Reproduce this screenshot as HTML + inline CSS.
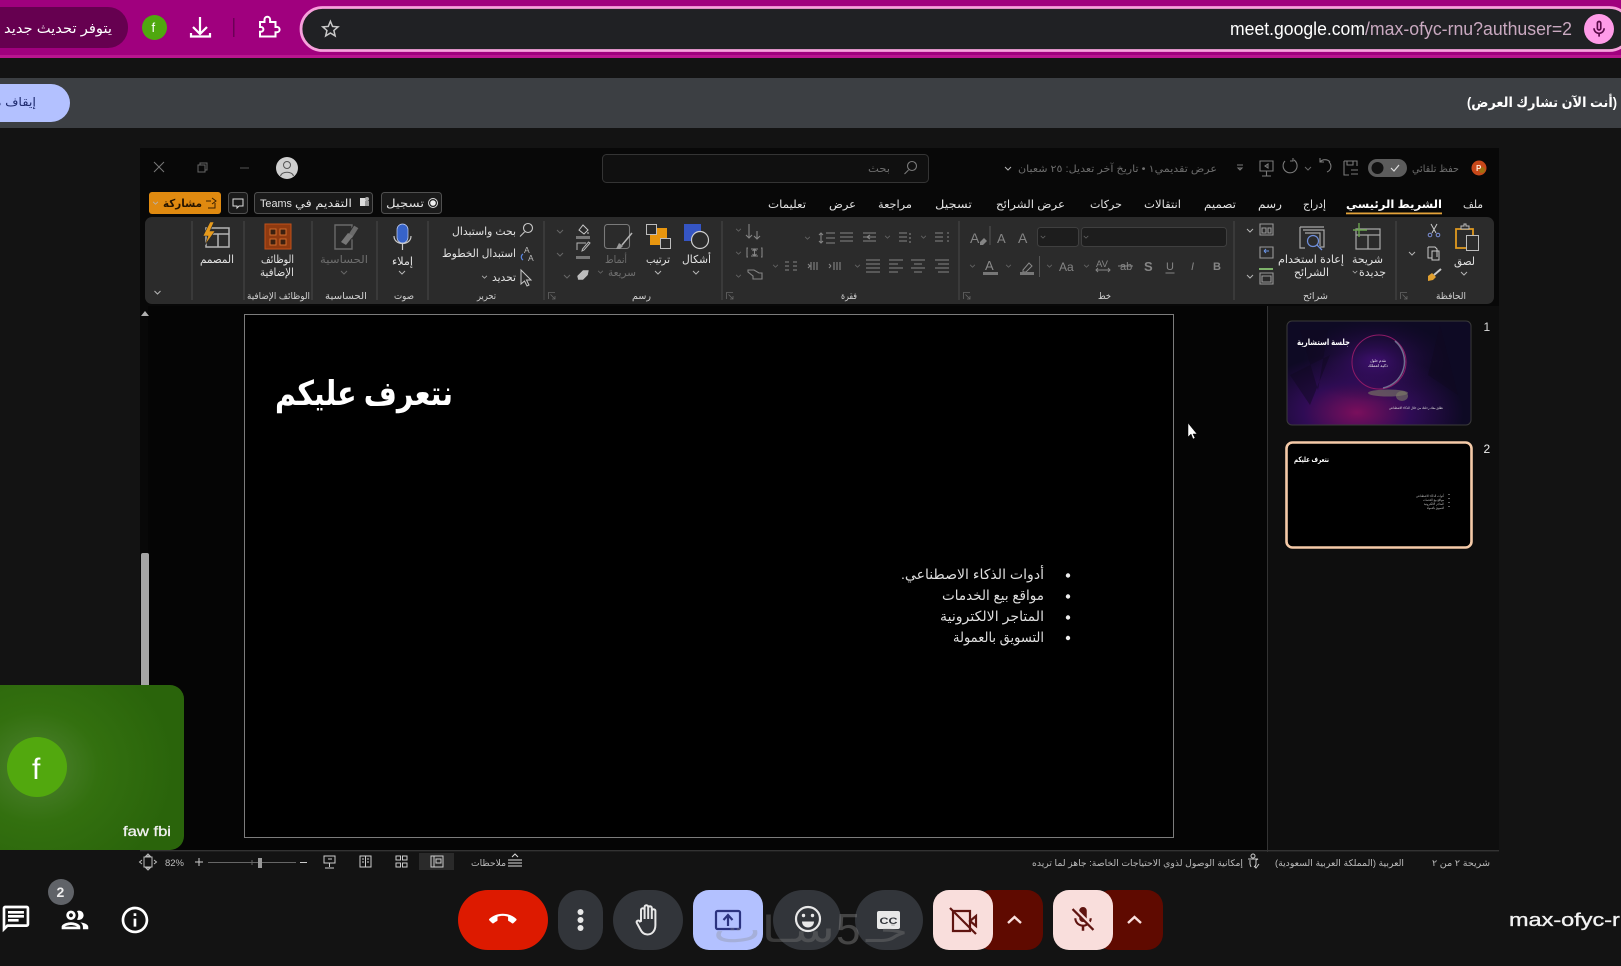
<!DOCTYPE html>
<html lang="ar"><head><meta charset="utf-8"><title>Meet</title>
<style>
html,body{margin:0;padding:0;background:#131313;width:1621px;height:966px;overflow:hidden}
svg{display:block;position:absolute;left:0;top:0}
text{font-family:"Liberation Sans","DejaVu Sans","Noto Sans CJK SC",sans-serif;fill:#d8d8d8;font-size:10.5px}
.t{font-size:11px;fill:#e2e2e2}
.d{fill:#6e6e6e}
.g{font-size:9.5px;fill:#cfcfcf}
.s{font-size:9px;fill:#bdbdbd}
.i{fill:none;stroke:#c9c9c9;stroke-width:1.1}
.m{fill:none;stroke:#7a7a7a;stroke-width:1.1}
.w{fill:#fff}
.r{direction:rtl;unicode-bidi:plaintext}
</style></head><body>
<svg width="1621" height="966" viewBox="0 0 1621 966" xmlns="http://www.w3.org/2000/svg">
<defs>
<symbol id="c" viewBox="0 0 8 5" overflow="visible"><path d="M1 1l3 3 3-3" fill="none" stroke="#b5b5b5" stroke-width="1"/></symbol>
<symbol id="cd" viewBox="0 0 8 5" overflow="visible"><path d="M1 1l3 3 3-3" fill="none" stroke="#666" stroke-width="1"/></symbol>
<symbol id="l" viewBox="0 0 8 8" overflow="visible"><path d="M.5 7V.5H7M2.500 2.500l4.500 4.500M7 4v3H4" fill="none" stroke="#666" stroke-width=".8"/></symbol>
<radialGradient id="tile" cx="20%" cy="50%" r="75%"><stop offset="0" stop-color="#4f8232"/><stop offset=".45" stop-color="#33700f"/><stop offset="1" stop-color="#2a640b"/></radialGradient>
<radialGradient id="th1" cx="38%" cy="88%" r="58%"><stop offset="0" stop-color="#7a0f5c"/><stop offset=".5" stop-color="#2f0c55"/><stop offset="1" stop-color="#0e0a24"/></radialGradient>
<radialGradient id="th2" cx="48%" cy="38%" r="40%"><stop offset="0" stop-color="#45107a" stop-opacity=".85"/><stop offset="1" stop-color="#200a3a" stop-opacity="0"/></radialGradient>
<clipPath id="cthumb"><rect x="1287" y="321" width="184" height="104" rx="5"/></clipPath>
</defs>

<!-- browser chrome -->
<rect width="1621" height="55" fill="#a0007e"/>
<rect y="55" width="1621" height="3" fill="#b8158f"/>
<rect x="-30" y="7" width="158" height="41" rx="20" fill="#660050"/>
<text x="4" y="33" textLength="108" lengthAdjust="spacingAndGlyphs" style="font-size:14px;fill:#fff">يتوفر تحديث جديد</text>
<ellipse cx="154.500" cy="27.500" rx="12.500" ry="12.500" fill="#4fa80f"/>
<text x="151.500" y="32" style="font-size:13px;fill:#fff">f</text>
<path d="M200 17v17M193 27l7 7 7-7M191 33v3.500h19V33" fill="none" stroke="#fff" stroke-width="2.200"/>
<rect x="233" y="18" width="1.500" height="19" fill="#6c0056"/>
<path d="M260 22h4.500v-2.500a2.800 2.800 0 0 1 5.600 0V22h5.400v5h1.500a2.600 2.600 0 0 1 0 5.200h-1.500V36.500h-15.500v-4.700h1a2.400 2.400 0 0 0 0-4.800h-1z" fill="none" stroke="#fff" stroke-width="2"/>
<rect x="301" y="7.500" width="1330" height="43" rx="21.500" fill="#202124" stroke="#f7a0dc" stroke-width="2.800"/>
<g transform="translate(319,17.500) scale(.95)"><path fill="#c8c8c8" d="M22 9.240l-7.190-.62L12 2 9.190 8.630 2 9.240l5.460 4.730L5.820 21 12 17.270 18.180 21l-1.630-7.030L22 9.240zM12 15.400l-3.760 2.270 1-4.280-3.320-2.880 4.380-.38L12 6.100l1.710 4.040 4.380.38-3.320 2.880 1 4.280L12 15.400z"/></g>
<text x="1230" y="35" textLength="135" lengthAdjust="spacingAndGlyphs" style="font-size:18px;fill:#fff">meet.google.com</text>
<text x="1365" y="35" textLength="207" lengthAdjust="spacingAndGlyphs" style="font-size:18px;fill:#c9a9c0">/max-ofyc-rnu?authuser=2</text>
<circle cx="1599" cy="29" r="15" fill="#ff9be8"/>
<g transform="translate(1589,19) scale(.84)"><path fill="#5a0a48" d="M12 14c1.660 0 3-1.340 3-3V5c0-1.660-1.340-3-3-3S9 3.340 9 5v6c0 1.660 1.340 3 3 3zM11 5c0-.55.45-1 1-1s1 .45 1 1v6c0 .55-.45 1-1 1s-1-.45-1-1V5zm6 6c0 2.760-2.240 5-5 5s-5-2.240-5-5H5c0 3.530 2.610 6.430 6 6.920V21h2v-3.080c3.390-.49 6-3.390 6-6.920h-2z"/></g>

<!-- presenting bar -->
<rect y="78" width="1621" height="50" fill="#3c3f43"/>
<rect x="-60" y="84" width="130" height="38" rx="19" fill="#b3c1ff"/>
<text x="-40" y="106" textLength="76" lengthAdjust="spacingAndGlyphs" style="font-size:12px;fill:#1e2a6e">إيقاف مشاركة</text>
<text class="r" x="1617" y="107" textLength="150" lengthAdjust="spacingAndGlyphs" style="font-size:13.500px;font-weight:bold;fill:#fff">(أنت الآن تشارك العرض)</text>

<!-- PowerPoint window -->
<rect x="140" y="148" width="1359" height="704" fill="#080808"/>
<path d="M154 162l10 10M164 162l-10 10" stroke="#777" fill="none"/>
<path d="M198 165h7v7h-7zM200 165v-2h7v7h-2" stroke="#666" fill="none"/>
<path d="M240 168h9" stroke="#555"/>
<circle cx="287" cy="168" r="11" fill="#cfcfcf"/>
<circle cx="287" cy="165" r="3.500" fill="none" stroke="#555"/>
<path d="M280.500 176c1-5 12-5 13 0" fill="none" stroke="#555"/>
<rect x="602.500" y="154.500" width="326" height="28" rx="4" fill="#101010" stroke="#343434"/>
<text x="868" y="172" textLength="22" lengthAdjust="spacingAndGlyphs" class="d">بحث</text>
<circle cx="912" cy="166" r="4.500" class="m"/><path d="M908.500 170l-4 4" class="m"/>
<use href="#c" x="1004" y="166" width="8" height="5"/>
<text class="d r" x="1217" y="172" textLength="199" lengthAdjust="spacingAndGlyphs" style="font-size:10px">عرض تقديمي١ • تاريخ آخر تعديل: ٢٥ شعبان</text>
<path d="M1237 165h6M1238 168h4l-2 2z" stroke="#777" fill="none"/>
<path d="M1260 161h13v10h-13zM1266.500 171v5M1262 176h9M1268 164l-3 2 3 2z" class="m"/>
<path d="M1285 161a7 7 0 1 0 9 -1M1293 158v3h-3" class="m"/>
<use href="#cd" x="1304" y="166" width="8" height="5"/>
<path d="M1330 162a6.500 6.500 0 0 0-10 0M1320 158v4h4M1329 162a6 6 0 0 1-2 10" class="m"/>
<path d="M1344 161h13v5M1344 161v14h5M1347 161v4h6v-4M1351 170h7M1351 174h7" class="m"/>
<rect x="1368" y="159" width="39" height="18" rx="9" fill="#5c5c5c"/>
<circle cx="1377.500" cy="168" r="6" fill="#111"/>
<path d="M1391 168l3 3 5-6" fill="none" stroke="#ddd" stroke-width="1.200"/>
<text x="1412" y="172" textLength="47" lengthAdjust="spacingAndGlyphs" class="d" style="font-size:10px">حفظ تلقائي</text>
<circle cx="1479" cy="168" r="7.500" fill="#c8481a"/><circle cx="1482" cy="170" r="3" fill="#a0700f"/>
<text x="1476" y="171" style="font-size:8px;font-weight:bold;fill:#ffe8d8">P</text>

<!-- buttons row -->
<rect x="149" y="192" width="72" height="22" rx="3" fill="#e08a10"/>
<use href="#c" x="152" y="201" width="7" height="4"/>
<text x="163" y="207" textLength="39" lengthAdjust="spacingAndGlyphs" style="font-size:11px;fill:#241400;font-weight:bold">مشاركة</text>
<path d="M206 201h5M208 208h7v-5M212 198l4 3-4 3" fill="none" stroke="#3a2000"/>
<rect x="228.500" y="192.500" width="19" height="21" rx="3" fill="#1a1a1a" stroke="#4f4f4f"/>
<path d="M233 199h10v7h-4l-2 2v-2h-4z" fill="none" stroke="#ddd"/>
<rect x="254.500" y="192.500" width="118" height="21" rx="3" fill="#1a1a1a" stroke="#4f4f4f"/>
<text x="260" y="207" textLength="32" lengthAdjust="spacingAndGlyphs" class="t">Teams</text>
<text x="295" y="207" textLength="57" lengthAdjust="spacingAndGlyphs" class="t">التقديم في</text>
<rect x="360" y="198" width="6" height="8" fill="#ddd"/><circle cx="367" cy="199" r="2" fill="#aaa"/><rect x="365" y="201" width="4" height="5" fill="#999"/>
<rect x="381.500" y="192.500" width="60" height="21" rx="3" fill="#1a1a1a" stroke="#4f4f4f"/>
<text x="386" y="207" textLength="38" lengthAdjust="spacingAndGlyphs" class="t">تسجيل</text>
<circle cx="433" cy="203" r="4.500" fill="none" stroke="#ddd"/><circle cx="433" cy="203" r="2.800" fill="#eee"/>

<!-- tabs -->
<g class="tabs">
<text x="768" y="208" textLength="38" lengthAdjust="spacingAndGlyphs" class="t">تعليمات</text>
<text x="829" y="208" textLength="27" lengthAdjust="spacingAndGlyphs" class="t">عرض</text>
<text x="878" y="208" textLength="34" lengthAdjust="spacingAndGlyphs" class="t">مراجعة</text>
<text x="935" y="208" textLength="37" lengthAdjust="spacingAndGlyphs" class="t">تسجيل</text>
<text x="996" y="208" textLength="69" lengthAdjust="spacingAndGlyphs" class="t">عرض الشرائح</text>
<text x="1090" y="208" textLength="32" lengthAdjust="spacingAndGlyphs" class="t">حركات</text>
<text x="1144" y="208" textLength="37" lengthAdjust="spacingAndGlyphs" class="t">انتقالات</text>
<text x="1204" y="208" textLength="32" lengthAdjust="spacingAndGlyphs" class="t">تصميم</text>
<text x="1258" y="208" textLength="24" lengthAdjust="spacingAndGlyphs" class="t">رسم</text>
<text x="1303" y="208" textLength="23" lengthAdjust="spacingAndGlyphs" class="t">إدراج</text>
<text x="1346" y="208" textLength="96" lengthAdjust="spacingAndGlyphs" class="t" style="font-weight:bold;fill:#fff">الشريط الرئيسي</text>
<text x="1463" y="208" textLength="20" lengthAdjust="spacingAndGlyphs" class="t">ملف</text>
</g>
<rect x="1346" y="212.500" width="96" height="1.800" fill="#e3a33a"/>

<!-- ribbon -->
<rect x="145" y="217" width="1349" height="87" rx="7" fill="#2b2b2b"/>
<path d="M192 221v79M244 221v79M312 221v79M377 221v79M428 221v79M544 221v79M722 221v79M959 221v79M1234 221v79M1396 221v79" stroke="#4a4a4a" fill="none"/>
<use href="#c" x="153" y="290" width="9" height="5"/>

<!-- group labels -->
<text x="247" y="299" textLength="63" lengthAdjust="spacingAndGlyphs" class="g">الوظائف الإضافية</text>
<text x="325" y="299" textLength="42" lengthAdjust="spacingAndGlyphs" class="g">الحساسية</text>
<text x="394" y="299" textLength="20" lengthAdjust="spacingAndGlyphs" class="g">صوت</text>
<text x="477" y="299" textLength="19" lengthAdjust="spacingAndGlyphs" class="g">تحرير</text>
<text x="632" y="299" textLength="19" lengthAdjust="spacingAndGlyphs" class="g">رسم</text>
<text x="841" y="299" textLength="16" lengthAdjust="spacingAndGlyphs" class="g">فقرة</text>
<text x="1098" y="299" textLength="13" lengthAdjust="spacingAndGlyphs" class="g">خط</text>
<text x="1303" y="299" textLength="25" lengthAdjust="spacingAndGlyphs" class="g">شرائح</text>
<text x="1436" y="299" textLength="30" lengthAdjust="spacingAndGlyphs" class="g">الحافظة</text>
<use href="#l" x="548" y="292" width="8" height="8"/><use href="#l" x="726" y="292" width="8" height="8"/><use href="#l" x="963" y="292" width="8" height="8"/><use href="#l" x="1400" y="292" width="8" height="8"/>

<!-- designer -->
<path d="M206 228h23v19h-23zM206 234h23M218 234v13" fill="none" stroke="#b5b5b5" stroke-width="1.500"/>
<path d="M210 222l-7 14h5l-3 9 10-14h-5l4-9z" fill="#e69a1c" stroke="#2b2b2b" stroke-width=".6"/>
<text x="200" y="263" textLength="34" lengthAdjust="spacingAndGlyphs" class="t">المصمم</text>
<!-- add-ins -->
<rect x="265" y="224" width="26" height="25" fill="#8f3a10" stroke="#c0501a"/>
<path d="M270 229h6v6h-6zM280 229h6v6h-6zM270 239h6v6h-6zM280 239h6v6h-6z" fill="#3b2010" stroke="#d06a2a"/>
<text x="261" y="263" textLength="33" lengthAdjust="spacingAndGlyphs" class="t">الوظائف</text>
<text x="260" y="276" textLength="34" lengthAdjust="spacingAndGlyphs" class="t">الإضافية</text>
<!-- sensitivity -->
<path d="M335 225h17v24h-17z" fill="none" stroke="#6a6a6a" stroke-width="1.400"/>
<path d="M347 236l7-11 5 3-7 11z" fill="#6a6a6a" stroke="#2b2b2b"/><path d="M341 242l7-9 5 3-7 9z" fill="#777"/>
<text x="320" y="263" textLength="48" lengthAdjust="spacingAndGlyphs" class="d">الحساسية</text>
<use href="#cd" x="340" y="270" width="8" height="5"/>
<!-- dictate -->
<rect x="397" y="224" width="11" height="19" rx="5.500" fill="#3763c9" stroke="#c7d4f5" stroke-width=".7"/>
<path d="M394 236c0 10 17 10 17 0M402.500 244v6" fill="none" stroke="#c9c9c9" stroke-width="1.200"/>
<text x="392" y="265" textLength="21" lengthAdjust="spacingAndGlyphs" class="t">إملاء</text>
<use href="#c" x="398" y="270" width="8" height="5"/>
<!-- editing -->
<text x="452" y="235" textLength="64" lengthAdjust="spacingAndGlyphs" class="t">بحث واستبدال</text>
<circle cx="528" cy="228" r="4.500" class="i"/><path d="M524.500 232l-4.500 4.500" class="i"/>
<text x="442" y="257" textLength="74" lengthAdjust="spacingAndGlyphs" class="t">استبدال الخطوط</text>
<text x="524" y="253" style="font-size:8.500px;fill:#bbb">A</text><text x="528" y="261" style="font-size:8.500px;fill:#bbb">A</text>
<path d="M523 254a3.500 3.500 0 0 0 0 6" fill="none" stroke="#5a86e0" stroke-width="1.200"/>
<text x="492" y="281" textLength="24" lengthAdjust="spacingAndGlyphs" class="t">تحديد</text>
<use href="#c" x="481" y="275" width="7" height="4"/>
<path d="M521 270v14l3.500-3 2.500 5 2-1-2.500-5h4.500z" fill="none" stroke="#c9c9c9"/>
<!-- drawing small -->
<use href="#cd" x="556" y="229" width="8" height="5"/><use href="#cd" x="556" y="252" width="8" height="5"/><use href="#cd" x="563" y="274" width="8" height="5"/>
<path d="M579 230l4-5 5 5-4 4zM588 232v2" fill="none" stroke="#c9c9c9"/><rect x="576" y="236" width="14" height="3" fill="#777"/>
<path d="M577 250v-7h9M590 243l-6 7-2 1 .5-2 6-7z" fill="none" stroke="#b5b5b5"/><rect x="576" y="256" width="14" height="3" fill="#777"/>
<path d="M577 276l6-6h6l-1 5-5 5h-5z" fill="#bdbdbd" stroke="#333" stroke-width=".5"/>
<!-- quick styles -->
<rect x="604.500" y="224.500" width="25" height="24" rx="3" fill="none" stroke="#7a7a7a" stroke-width="1.100"/>
<path d="M632 233l-10 12" stroke="#b5b5b5" stroke-width="1.500"/><path d="M619 243l4 3-3 3h-4z" fill="#999"/>
<text x="605" y="263" textLength="22" lengthAdjust="spacingAndGlyphs" class="d">أنماط</text>
<text x="608" y="276" textLength="28" lengthAdjust="spacingAndGlyphs" class="d">سريعة</text>
<use href="#cd" x="597" y="270" width="7" height="4"/>
<!-- arrange -->
<rect x="650" y="228" width="17" height="17" fill="#e8960f"/>
<rect x="646.500" y="224.500" width="10" height="10" fill="#2b2b2b" stroke="#bdbdbd"/>
<rect x="660.500" y="238.500" width="10" height="10" fill="#2b2b2b" stroke="#bdbdbd"/>
<text x="646" y="263" textLength="24" lengthAdjust="spacingAndGlyphs" class="t">ترتيب</text>
<use href="#c" x="654" y="270" width="8" height="5"/>
<!-- shapes -->
<rect x="684" y="224" width="17" height="17" fill="#3555c4"/>
<circle cx="700" cy="240" r="8.500" fill="#2b2b2b" stroke="#cfcfcf" stroke-width="1.200"/>
<text x="682" y="263" textLength="29" lengthAdjust="spacingAndGlyphs" class="t">أشكال</text>
<use href="#c" x="692" y="270" width="8" height="5"/>
<!-- paragraph -->
<g class="m" style="stroke:#858585">
<path d="M749 224v14M746 235l3 3 3-3M757 231v8M754 236l3 3 3-3"/>
<path d="M748 248h-1v9h1M761 248h1v9h-1M751 249h7M751 256h7M754.500 249v7M752.500 251l2-2 2 2M752.500 254l2 2 2-2"/>
<path d="M748 270h6l5 3h3v6h-9v-3l-5-4z"/>
<path d="M935 233h8M935 237h8M935 241h8M947 233h2M947 237h2M947 241h2"/>
<path d="M899 233h8M899 237h8M899 241h8M910 233v2M910 237v2M910 241v2"/>
<path d="M863 233h13M863 237h13M863 241h13M867 237l3-2M867 237l3 2"/>
<path d="M840 233h13M840 237h13M840 241h13M847 237h5"/>
<path d="M821 233v10M819 235l2-2 2 2M819 241l2 2 2-2M826 233h9M826 238h9M826 243h9"/>
<path d="M935 260h14M938 264h11M935 268h14M938 272h11"/>
<path d="M911 260h14M914 264h8M911 268h14M914 272h8"/>
<path d="M889 260h14M889 264h9M889 268h14M889 272h9"/>
<path d="M866 260h14M866 264h14M866 268h14M866 272h14"/>
<path d="M837 262v8M834 262v8M840 262v8M831 266l-2-2M831 266l-2 2"/>
<path d="M814 262v8M817 262v8M811 262v8M808 264l2 2-2 2"/>
<path d="M785 262h4M785 266h4M785 270h4M793 262h4M793 266h4M793 270h4"/>
</g>
<use href="#cd" x="735" y="228" width="7" height="4"/><use href="#cd" x="735" y="251" width="7" height="4"/><use href="#cd" x="735" y="274" width="7" height="4"/>
<use href="#cd" x="804" y="236" width="7" height="4"/><use href="#cd" x="884" y="235" width="7" height="4"/><use href="#cd" x="920" y="235" width="7" height="4"/>
<use href="#cd" x="772" y="264" width="7" height="4"/><use href="#cd" x="854" y="264" width="7" height="4"/>
<!-- font -->
<text x="970" y="243" style="font-size:14px;fill:#858585">A</text><path d="M980 242l4-4 3 3-4 4h-3z" fill="#858585"/>
<path d="M990 226v19" stroke="#555"/>
<text x="997" y="243" style="font-size:13px;fill:#858585">A</text>
<text x="1018" y="243" style="font-size:14px;fill:#858585">A</text>
<rect x="1037.500" y="227.500" width="41" height="19" rx="3" fill="#1d1d1d" stroke="#3f3f3f"/>
<rect x="1081.500" y="227.500" width="145" height="19" rx="3" fill="#1d1d1d" stroke="#3f3f3f"/>
<use href="#cd" x="1040" y="235" width="6" height="4"/><use href="#cd" x="1083" y="235" width="6" height="4"/>
<use href="#cd" x="969" y="264" width="7" height="4"/><use href="#cd" x="1005" y="264" width="7" height="4"/><use href="#cd" x="1046" y="264" width="7" height="4"/><use href="#cd" x="1083" y="264" width="7" height="4"/>
<text x="985" y="270" style="font-size:13px;fill:#8a8a8a">A</text><rect x="983" y="272" width="15" height="3" fill="#777"/>
<path d="M1023 270l6-7 3 3-6 6h-3z" fill="none" stroke="#8a8a8a"/><rect x="1020" y="272" width="14" height="3" fill="#777"/>
<path d="M1039.500 256v21" stroke="#555"/>
<text x="1059" y="271" style="font-size:12px;fill:#858585">Aa</text>
<text x="1096" y="267" style="font-size:9.500px;fill:#858585">AV</text><path d="M1096 270h14M1098 268l-2 2 2 2M1108 268l2 2-2 2" stroke="#858585" fill="none"/>
<text x="1120" y="270" style="font-size:11px;fill:#858585">ab</text><path d="M1118 266h15" stroke="#858585"/>
<text x="1144" y="271" style="font-size:13px;fill:#858585;font-weight:bold">S</text>
<text x="1166" y="270" style="font-size:11px;fill:#858585">U</text><path d="M1165.500 273h9" stroke="#858585"/>
<text x="1191" y="270" style="font-size:11px;fill:#858585;font-style:italic">I</text>
<text x="1213" y="270" style="font-size:11px;fill:#858585;font-weight:bold">B</text>
<!-- slides group -->
<use href="#c" x="1246" y="228" width="8" height="5"/><use href="#c" x="1246" y="274" width="8" height="5"/><use href="#c" x="1352" y="270" width="6" height="4"/>
<path d="M1260 224h13v11h-13zM1262 228h4v5h-4zM1268 228h3v5h-3z" class="i" style="stroke:#999"/>
<path d="M1260 247h13v11h-13z" class="i" style="stroke:#999"/><path d="M1264 251h5M1264 251l2-2M1264 251l2 2" stroke="#6b94e6" fill="none"/>
<path d="M1260 273h13v11h-13zM1262 276h9v6h-9z" class="i" style="stroke:#999"/><rect x="1259" y="268" width="14" height="2" fill="#7eb36a"/>
<path d="M1300 227h24M1300 227v21h5M1303 230h21v17h-4M1305 233h15v13" fill="none" stroke="#a8a8a8" stroke-width="1.200"/>
<circle cx="1313" cy="241" r="5.500" fill="#2b2b2b" stroke="#6f8fdc" stroke-width="1.200"/><path d="M1317 245l5 5" stroke="#6f8fdc" stroke-width="1.300"/>
<text x="1278" y="263" textLength="66" lengthAdjust="spacingAndGlyphs" class="t">إعادة استخدام</text>
<text x="1294" y="276" textLength="35" lengthAdjust="spacingAndGlyphs" class="t">الشرائح</text>
<path d="M1356 229h24v20h-24zM1356 235h24M1368 235v14" fill="none" stroke="#a8a8a8" stroke-width="1.200"/>
<path d="M1359 223v14M1353 230h14" stroke="#6ba34f" stroke-width="1.400"/>
<text x="1352" y="263" textLength="31" lengthAdjust="spacingAndGlyphs" class="t">شريحة</text>
<text x="1359" y="276" textLength="27" lengthAdjust="spacingAndGlyphs" class="t">جديدة</text>
<!-- clipboard -->
<path d="M1456 229h17v19h-17z" fill="none" stroke="#e09a20" stroke-width="1.800"/>
<path d="M1461 229v-3h3v-2h2v2h3v3z" fill="#2b2b2b" stroke="#bdbdbd"/>
<rect x="1466.500" y="235.500" width="12" height="15" fill="#2b2b2b" stroke="#bdbdbd"/>
<text x="1454" y="265" textLength="21" lengthAdjust="spacingAndGlyphs" class="t">لصق</text>
<use href="#c" x="1460" y="271" width="8" height="5"/>
<path d="M1431 224l5 9M1437 224l-5 9" stroke="#c9c9c9" fill="none"/><circle cx="1430" cy="235" r="1.800" fill="none" stroke="#7c90d8"/><circle cx="1438" cy="235" r="1.800" fill="none" stroke="#7c90d8"/>
<path d="M1428 247h7l2 2v8M1428 247v11h4M1432 251h7v9h-7z" fill="none" stroke="#c9c9c9"/>
<path d="M1441 269l-7 6" stroke="#c9c9c9" stroke-width="2"/><path d="M1428 276l4-3 4 4-3 3-5 1z" fill="#e0a030"/>
<use href="#c" x="1408" y="251" width="8" height="5"/>

<!-- editor area -->
<rect x="1267" y="306" width="1" height="546" fill="#333"/>
<rect x="1268" y="306" width="231" height="546" fill="#0e0e0e"/>
<rect x="148" y="306" width="1119" height="544" fill="#050505"/>
<path d="M141 316l4-5 4 5z" fill="#b0b0b0"/>
<rect x="141" y="553" width="8" height="135" rx="2" fill="#a5a5a5"/>
<rect x="244.500" y="314.500" width="929" height="523" fill="#000" stroke="#7c7c7c"/>
<text x="275" y="405" textLength="178" lengthAdjust="spacingAndGlyphs" style="font-size:34px;font-weight:bold;fill:#fff;font-family:'Liberation Serif','DejaVu Sans',serif">نتعرف عليكم</text>
<text class="r" x="1044" y="579" textLength="143" lengthAdjust="spacingAndGlyphs" style="font-size:14px;fill:#dedede">أدوات الذكاء الاصطناعي.</text>
<text class="r" x="1044" y="600" textLength="102" lengthAdjust="spacingAndGlyphs" style="font-size:14px;fill:#dedede">مواقع بيع الخدمات</text>
<text class="r" x="1044" y="621" textLength="104" lengthAdjust="spacingAndGlyphs" style="font-size:14px;fill:#dedede">المتاجر الالكترونية</text>
<text class="r" x="1044" y="642" textLength="91" lengthAdjust="spacingAndGlyphs" style="font-size:14px;fill:#dedede">التسويق بالعمولة</text>
<circle cx="1068" cy="575.500" r="2.200" fill="#eee"/><circle cx="1068" cy="596.500" r="2.200" fill="#eee"/><circle cx="1068" cy="617.500" r="2.200" fill="#eee"/><circle cx="1068" cy="638" r="2.200" fill="#eee"/>
<path d="M1188 423v14l3-3 2 5 2-1-2-4h4z" fill="#fff" stroke="#000" stroke-width=".5"/>

<!-- thumbnails -->
<text x="1483.500" y="331" style="font-size:12px;fill:#ddd">1</text>
<rect x="1287" y="321" width="184" height="104" rx="5" fill="url(#th1)" stroke="#3a3a3a"/>
<g clip-path="url(#cthumb)">
<rect x="1287" y="321" width="184" height="104" fill="url(#th2)"/>
<path d="M1300 330l18 60 10-60zM1440 325l-12 50 30 20zM1290 375l40-20-20 50z" fill="#0f0820" opacity=".5"/>
<circle cx="1379" cy="362" r="27" fill="none" stroke="#8e1a66" stroke-width="1"/>
<path d="M1395 341a27 27 0 0 1-12 47" fill="none" stroke="#6f6f90" stroke-width="1.500"/>
<ellipse cx="1388" cy="393" rx="20" ry="3.500" fill="#7d7d68" opacity=".6"/>
<ellipse cx="1402" cy="396" rx="6" ry="5" fill="#7d7d68" opacity=".6"/>
</g>
<text x="1297" y="345" textLength="53" lengthAdjust="spacingAndGlyphs" style="font-size:8.500px;fill:#fff;font-weight:bold">جلسة استشارية</text>
<text x="1370" y="362" textLength="16" lengthAdjust="spacingAndGlyphs" style="font-size:4px;fill:#eee">نقدم حلول</text>
<text x="1368" y="367" textLength="20" lengthAdjust="spacingAndGlyphs" style="font-size:4px;fill:#eee">ذكية لعملك</text>
<text x="1389" y="409" textLength="54" lengthAdjust="spacingAndGlyphs" style="font-size:3.500px;fill:#ddd">نطلق معك رحلتك من خلال الذكاء الاصطناعي</text>
<text x="1483.500" y="453" style="font-size:12px;fill:#eee">2</text>
<rect x="1286.500" y="442.500" width="185" height="105" rx="6" fill="#000" stroke="#f5caa8" stroke-width="2.600"/>
<text x="1294" y="462" textLength="35" lengthAdjust="spacingAndGlyphs" style="font-size:7.500px;fill:#fff;font-weight:bold">نتعرف عليكم</text>
<text x="1416" y="497" textLength="28" lengthAdjust="spacingAndGlyphs" style="font-size:3.500px;fill:#bbb">أدوات الذكاء الاصطناعي</text>
<text x="1423" y="501" textLength="21" lengthAdjust="spacingAndGlyphs" style="font-size:3.500px;fill:#bbb">مواقع بيع الخدمات</text>
<text x="1424" y="505" textLength="20" lengthAdjust="spacingAndGlyphs" style="font-size:3.500px;fill:#bbb">المتاجر الالكترونية</text>
<text x="1427" y="509" textLength="17" lengthAdjust="spacingAndGlyphs" style="font-size:3.500px;fill:#bbb">التسويق بالعمولة</text>
<path d="M1449 494v1M1449 498v1M1449 502v1M1449 506v1" stroke="#bbb"/>

<!-- status bar -->
<rect x="140" y="850" width="1359" height="1.500" fill="#333"/>
<rect x="140" y="852" width="1359" height="24" fill="#131313"/>
<path d="M144 857h8v10h-8zM142 860l-2.500 2 2.500 2M154 860l2.500 2-2.500 2M148 854l-2 2h4zM148 870l-2-2h4z" fill="none" stroke="#bbb"/>
<text x="165" y="866" textLength="19" lengthAdjust="spacingAndGlyphs" class="s">82%</text>
<path d="M195 862h8M199 858v8" stroke="#ccc"/>
<path d="M208 862.500h88" stroke="#666"/><rect x="258" y="858" width="4" height="10" fill="#999"/><path d="M252 860v5" stroke="#666"/>
<path d="M300 862.500h7" stroke="#ccc"/>
<path d="M324 856h11v7h-11zM329.500 863v4M325 868h9M328 859h4" fill="none" stroke="#ccc"/>
<path d="M360 856h11v11h-11zM365.500 856v11M362 859h2M362 862h2M367 859h2M367 862h2" fill="none" stroke="#ccc"/>
<path d="M396 856h4.500v4H396zM402.500 856h4.500v4h-4.500zM396 863h4.500v4H396zM402.500 863h4.500v4h-4.500z" fill="none" stroke="#ccc"/>
<rect x="419" y="853" width="35" height="17" fill="#2a2a2a"/>
<path d="M431 856h12v11h-12zM434 856v11M436 859h5v4h-5z" fill="none" stroke="#ccc"/>
<text x="471" y="866" textLength="35" lengthAdjust="spacingAndGlyphs" class="s">ملاحظات</text>
<path d="M508 860h14M508 863h14M508 866h14M512 857l3-3 3 3" fill="none" stroke="#ddd"/>
<text x="1032" y="866" textLength="211" lengthAdjust="spacingAndGlyphs" class="s">إمكانية الوصول لذوي الاحتياجات الخاصة: جاهز لما تريده</text>
<circle cx="1253" cy="856" r="2" fill="none" stroke="#ccc"/><path d="M1248 859h10l-2 1v4l-1 3M1250 860v4l1 3M1254 866l2 2 3-4" fill="none" stroke="#ccc"/>
<text class="s r" x="1404" y="866" textLength="129" lengthAdjust="spacingAndGlyphs">العربية (المملكة العربية السعودية)</text>
<text x="1432" y="866" textLength="58" lengthAdjust="spacingAndGlyphs" class="s">شريحة ٢ من ٢</text>

<!-- self tile -->
<path d="M0 685h170a14 14 0 0 1 14 14v137a14 14 0 0 1-14 14H0z" fill="url(#tile)"/>
<circle cx="37" cy="767" r="30" fill="#52a80e"/>
<text x="32" y="779" style="font-size:30px;fill:#fff">f</text>
<text x="123" y="836" textLength="48" lengthAdjust="spacingAndGlyphs" style="font-size:14px;fill:#f0f0f0;stroke:#f0f0f0;stroke-width:.3">faw fbi</text>

<!-- left icons -->
<g transform="translate(0,903) scale(1.330)"><path fill="#fff" d="M20 2H4c-1.100 0-2 .9-2 2v18l4-4h14c1.100 0 2-.9 2-2V4c0-1.100-.9-2-2-2zm0 14H5.170L4 17.170V4h16v12zM6 12h8v2H6zm0-3h12v2H6zm0-3h12v2H6z"/></g>
<circle cx="61" cy="892" r="13" fill="#606368"/>
<text x="56.500" y="897" style="font-size:14px;font-weight:bold;fill:#eee">2</text>
<g transform="translate(59,904) scale(1.330)"><path fill="#fff" d="M9 13.750c-2.340 0-7 1.170-7 3.500V19h14v-1.750c0-2.330-4.660-3.500-7-3.500zM4.340 17c.84-.58 2.870-1.250 4.660-1.250s3.820.67 4.660 1.250H4.340zM9 12c1.930 0 3.500-1.570 3.500-3.500S10.930 5 9 5 5.500 6.570 5.500 8.500 7.070 12 9 12zm0-5c.83 0 1.500.67 1.500 1.500S9.830 10 9 10s-1.500-.67-1.500-1.500S8.170 7 9 7zm7.040 6.810c1.160.84 1.960 1.960 1.960 3.440V19h4v-1.750c0-2.020-3.500-3.170-5.960-3.440zM15 12c1.930 0 3.500-1.570 3.500-3.500S16.930 5 15 5c-.54 0-1.040.13-1.500.35.63.89 1 1.980 1 3.150s-.37 2.260-1 3.150c.46.22.96.35 1.500.35z"/></g>
<g transform="translate(119,904) scale(1.330)"><path fill="#fff" d="M11 7h2v2h-2zm0 4h2v6h-2zm1-9C6.480 2 2 6.480 2 12s4.480 10 10 10 10-4.480 10-10S17.520 2 12 2zm0 18c-4.410 0-8-3.590-8-8s3.590-8 8-8 8 3.590 8 8-3.590 8-8 8z"/></g>

<!-- toolbar -->
<rect x="458" y="890" width="90" height="60" rx="30" fill="#dd1a00"/>
<g transform="translate(489,906) scale(1.150,1.100)"><path fill="#fff" d="M12 9c-1.600 0-3.150.25-4.600.72v3.100c0 .39-.23.74-.56.9-.98.49-1.870 1.120-2.660 1.850-.18.18-.43.28-.7.28-.28 0-.53-.11-.71-.29L.29 13.080c-.18-.17-.29-.42-.29-.7 0-.28.11-.53.29-.71C3.340 8.780 7.460 7 12 7s8.660 1.780 11.710 4.670c.18.18.29.43.29.71 0 .28-.11.53-.29.71l-2.480 2.480c-.18.18-.43.29-.71.29-.27 0-.52-.11-.7-.28-.79-.74-1.690-1.360-2.670-1.850-.33-.16-.56-.5-.56-.9v-3.100C15.150 9.250 13.600 9 12 9z"/></g>
<rect x="558" y="890" width="45" height="60" rx="22" fill="#32353a"/>
<circle cx="580.500" cy="912" r="3" fill="#e8e8e8"/><circle cx="580.500" cy="920" r="3" fill="#e8e8e8"/><circle cx="580.500" cy="928" r="3" fill="#e8e8e8"/>
<rect x="613" y="890" width="70" height="60" rx="30" fill="#32353a"/>
<path d="M641 921v-11a1.800 1.800 0 0 1 3.600 0v9v-12a1.800 1.800 0 0 1 3.600 0v12v-11a1.800 1.800 0 0 1 3.600 0v11v-8a1.800 1.800 0 0 1 3.600 0v14c0 6-3.500 9.500-8 9.500-3.500 0-5.500-2-7-5l-3.500-6.500c-1-2 1.500-3.500 3-1.500z" fill="none" stroke="#e8e8e8" stroke-width="2"/>
<rect x="693" y="890" width="70" height="60" rx="16" fill="#b3c1ff"/>
<rect x="716" y="911" width="24" height="18" rx="1.500" fill="none" stroke="#2b3380" stroke-width="2.200"/>
<path d="M728 926v-10M723.500 920l4.500-5 4.500 5" fill="none" stroke="#2b3380" stroke-width="2.200"/>
<rect x="773" y="890" width="68" height="60" rx="30" fill="#32353a"/>
<circle cx="808" cy="919" r="12" fill="none" stroke="#e8e8e8" stroke-width="2.200"/>
<circle cx="803.500" cy="915.500" r="1.700" fill="#e8e8e8"/><circle cx="812.500" cy="915.500" r="1.700" fill="#e8e8e8"/>
<path d="M802 921.500h12c0 4-3 6-6 6s-6-2-6-6z" fill="#e8e8e8"/>
<rect x="855" y="890" width="68" height="60" rx="30" fill="#32353a"/>
<rect x="877" y="911" width="23" height="18" rx="2" fill="#e8e8e8"/>
<text x="879.500" y="924" textLength="18" lengthAdjust="spacingAndGlyphs" style="font-size:9.500px;font-weight:bold;fill:#32353a">CC</text>
<!-- watermark -->
<text x="713" y="942" textLength="122" lengthAdjust="spacingAndGlyphs" style="font-size:36px;fill:#8a8a8a;opacity:.32">سـات</text>
<text x="836" y="944" style="font-size:44px;fill:#8a8a8a;opacity:.42">5</text>
<text x="866" y="942" textLength="42" lengthAdjust="spacingAndGlyphs" style="font-size:34px;fill:#8a8a8a;opacity:.32">خـ</text>

<rect x="975" y="890" width="68" height="60" rx="16" fill="#5f0a00"/>
<rect x="933" y="890" width="60" height="60" rx="16" fill="#f9dedc"/>
<path d="M953 911h17v20h-17zM970 921l6-5v10z" fill="none" stroke="#5f1410" stroke-width="2.200"/>
<path d="M950 908l26 26" stroke="#5f1410" stroke-width="2.200"/>
<path d="M1008 923l6.500-6 6.500 6" fill="none" stroke="#f9dedc" stroke-width="2.400"/>
<rect x="1095" y="890" width="68" height="60" rx="16" fill="#5f0a00"/>
<rect x="1053" y="890" width="60" height="60" rx="16" fill="#f9dedc"/>
<g transform="translate(1068,904.500) scale(1.250)"><path fill="#5f1410" d="M19 11h-1.700c0 .74-.16 1.430-.43 2.050l1.230 1.230c.56-.98.9-2.090.9-3.280zm-4.020.17c0-.06.02-.11.02-.17V5c0-1.660-1.340-3-3-3S9 3.340 9 5v.18l5.980 5.990zM4.270 3L3 4.270l6.010 6.010V11c0 1.660 1.330 3 2.990 3 .22 0 .44-.03.65-.08l1.660 1.660c-.71.33-1.500.52-2.310.52-2.760 0-5.300-2.100-5.300-5.100H5c0 3.410 2.720 6.230 6 6.720V21h2v-3.280c.91-.13 1.770-.45 2.540-.9L19.730 21 21 19.730 4.270 3z"/></g>
<path d="M1128 923l6.500-6 6.500 6" fill="none" stroke="#f9dedc" stroke-width="2.400"/>
<text x="1509" y="926" textLength="137" lengthAdjust="spacingAndGlyphs" style="font-size:18.500px;fill:#f2f2f2;stroke:#f2f2f2;stroke-width:.35">max-ofyc-rnu</text>
</svg>
</body></html>
